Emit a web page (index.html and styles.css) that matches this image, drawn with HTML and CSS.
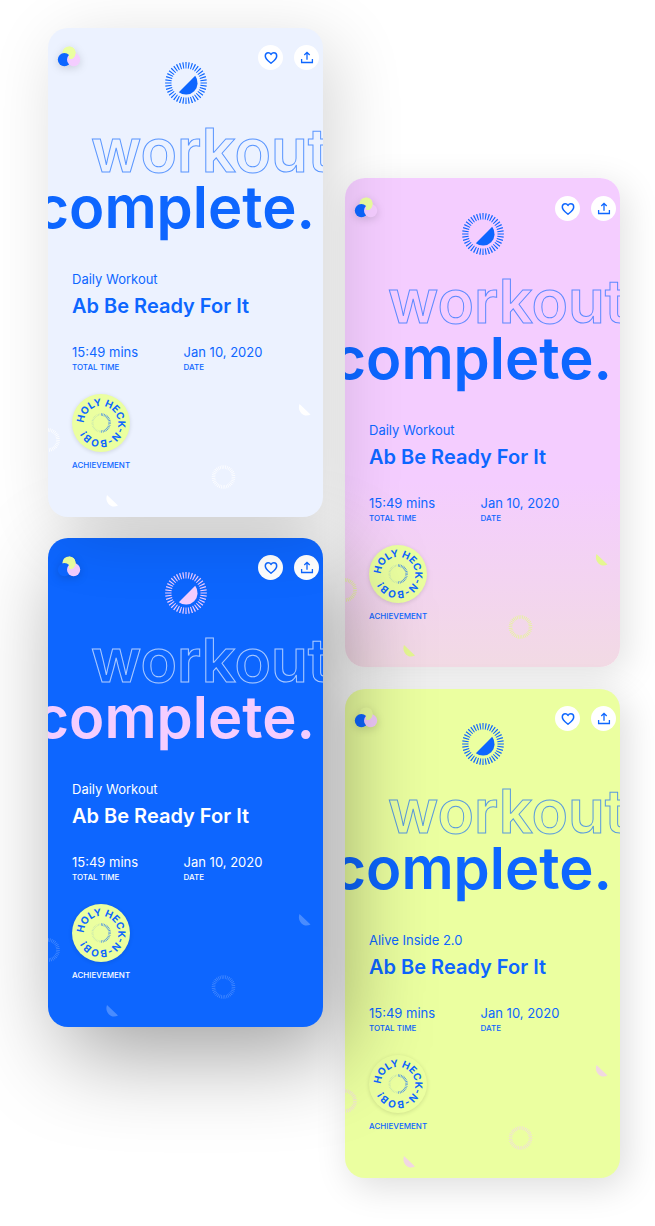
FILE: index.html
```
<!DOCTYPE html>
<html lang="en">
<head>
<meta charset="utf-8">
<meta name="viewport" content="width=device-width, initial-scale=1">
<title>Workout complete</title>
<link rel="stylesheet" href="styles.css">
</head>
<body>
<svg class="sprite" aria-hidden="true">
  <defs>
    <clipPath id="logo-right"><rect x="12" y="0" width="14" height="14"/></clipPath>
    <symbol id="logo" viewBox="0 0 24 24">
      <circle cx="12" cy="8" r="6.6" fill="#ebffa0"/>
      <circle cx="7.4" cy="14.6" r="6.6" fill="#0d66ff"/>
      <circle cx="16.6" cy="14.6" r="6.6" fill="#f4cdff"/>
      <circle cx="12" cy="8" r="6.6" fill="#ebffa0" clip-path="url(#logo-right)"/>
    </symbol>
    <symbol id="sun" viewBox="-21 -21 42 42">
      <circle r="17.7" fill="none" stroke="currentColor" stroke-width="6.4" pathLength="400" stroke-dasharray="4 6" stroke-dashoffset="2"/>
      <path d="M-7.2 9.2A11.7 11.7 0 0 0 9.2 -7.2Z" fill="currentColor"/>
    </symbol>
    <symbol id="heart" viewBox="0 0 14 14">
      <path d="M7 12.2C4.5 10.2 1.3 7.9 1.3 4.9C1.3 3 2.6 1.8 4.2 1.8C5.5 1.8 6.5 2.6 7 3.5C7.5 2.6 8.5 1.8 9.8 1.8C11.4 1.8 12.7 3 12.7 4.9C12.7 7.9 9.5 10.2 7 12.2Z" fill="none" stroke="currentColor" stroke-width="1.5" stroke-linejoin="round"/>
    </symbol>
    <symbol id="share" viewBox="0 0 14 14">
      <path d="M7 8.8V1.5M4.3 4L7 1.3L9.7 4M1.6 8V11.5H12.4V8" fill="none" stroke="currentColor" stroke-width="1.3"/>
    </symbol>
    <symbol id="decor" viewBox="0 0 275 489">
      <g fill="none" stroke="currentColor" stroke-width="3.6">
        <circle cx="0" cy="412" r="10" pathLength="360" stroke-dasharray="4 6"/>
        <circle cx="175.5" cy="449" r="10" pathLength="360" stroke-dasharray="4 6"/>
      </g>
      <path d="M251.5 376L262.5 386.5C259 388.5 255.5 387.5 253.5 385.5C251 383 250.2 379.5 251.5 376ZM59 467L70 477.5C66.5 479.5 63 478.5 61 476.5C58.5 474 57.7 470.5 59 467Z" fill="currentColor"/>
    </symbol>
    <symbol id="badge" viewBox="-29 -29 58 58">
      <path id="badge-ring" d="M-17 0A17 17 0 0 1 17 0A17 17 0 0 1 -17 0" fill="none"/>
      <text class="badge-text"><textPath href="#badge-ring">HOLY HECK-N-BOB!</textPath></text>
      <path d="M0 -8.5A8.5 8.5 0 0 1 0 8.5" fill="none" stroke="#0d66ff" stroke-width="2.6" stroke-dasharray=".7 .8" opacity=".75"/>
      <path d="M0 8.5A8.5 8.5 0 0 1 0 -8.5" fill="none" stroke="#0d66ff" stroke-width="2" stroke-dasharray=".5 .9" opacity=".2"/>
    </symbol>
  </defs>
</svg>

<main class="board">
  <div class="column column--front">
    <article class="card card--ice">
      <svg class="decor" aria-hidden="true"><use href="#decor"/></svg>
      <header class="top">
        <svg class="logo" aria-hidden="true"><use href="#logo"/></svg>
        <svg class="sun" aria-hidden="true"><use href="#sun"/></svg>
        <div class="actions">
          <button class="round" type="button" aria-label="Like"><svg class="icon"><use href="#heart"/></svg></button>
          <button class="round" type="button" aria-label="Share"><svg class="icon"><use href="#share"/></svg></button>
        </div>
      </header>
      <h2 class="hero"><span class="hero-line hero-line--outline">workout</span><span class="hero-line hero-line--solid">complete.</span></h2>
      <p class="series">Daily Workout</p>
      <h3 class="name">Ab Be Ready For It</h3>
      <dl class="stats">
        <div class="stat"><dt class="label">TOTAL TIME</dt><dd class="value">15:49 mins</dd></div>
        <div class="stat"><dt class="label">DATE</dt><dd class="value">Jan 10, 2020</dd></div>
      </dl>
      <figure class="award">
        <svg class="badge"><use href="#badge"/></svg>
        <figcaption class="label">ACHIEVEMENT</figcaption>
      </figure>
    </article>

    <article class="card card--blue">
      <svg class="decor" aria-hidden="true"><use href="#decor"/></svg>
      <header class="top">
        <svg class="logo" aria-hidden="true"><use href="#logo"/></svg>
        <svg class="sun" aria-hidden="true"><use href="#sun"/></svg>
        <div class="actions">
          <button class="round" type="button" aria-label="Like"><svg class="icon"><use href="#heart"/></svg></button>
          <button class="round" type="button" aria-label="Share"><svg class="icon"><use href="#share"/></svg></button>
        </div>
      </header>
      <h2 class="hero"><span class="hero-line hero-line--outline">workout</span><span class="hero-line hero-line--solid">complete.</span></h2>
      <p class="series">Daily Workout</p>
      <h3 class="name">Ab Be Ready For It</h3>
      <dl class="stats">
        <div class="stat"><dt class="label">TOTAL TIME</dt><dd class="value">15:49 mins</dd></div>
        <div class="stat"><dt class="label">DATE</dt><dd class="value">Jan 10, 2020</dd></div>
      </dl>
      <figure class="award">
        <svg class="badge"><use href="#badge"/></svg>
        <figcaption class="label">ACHIEVEMENT</figcaption>
      </figure>
    </article>
  </div>

  <div class="column column--back">
    <article class="card card--pink">
      <svg class="decor" aria-hidden="true"><use href="#decor"/></svg>
      <header class="top">
        <svg class="logo" aria-hidden="true"><use href="#logo"/></svg>
        <svg class="sun" aria-hidden="true"><use href="#sun"/></svg>
        <div class="actions">
          <button class="round" type="button" aria-label="Like"><svg class="icon"><use href="#heart"/></svg></button>
          <button class="round" type="button" aria-label="Share"><svg class="icon"><use href="#share"/></svg></button>
        </div>
      </header>
      <h2 class="hero"><span class="hero-line hero-line--outline">workout</span><span class="hero-line hero-line--solid">complete.</span></h2>
      <p class="series">Daily Workout</p>
      <h3 class="name">Ab Be Ready For It</h3>
      <dl class="stats">
        <div class="stat"><dt class="label">TOTAL TIME</dt><dd class="value">15:49 mins</dd></div>
        <div class="stat"><dt class="label">DATE</dt><dd class="value">Jan 10, 2020</dd></div>
      </dl>
      <figure class="award">
        <svg class="badge"><use href="#badge"/></svg>
        <figcaption class="label">ACHIEVEMENT</figcaption>
      </figure>
    </article>

    <article class="card card--lime">
      <svg class="decor" aria-hidden="true"><use href="#decor"/></svg>
      <header class="top">
        <svg class="logo" aria-hidden="true"><use href="#logo"/></svg>
        <svg class="sun" aria-hidden="true"><use href="#sun"/></svg>
        <div class="actions">
          <button class="round" type="button" aria-label="Like"><svg class="icon"><use href="#heart"/></svg></button>
          <button class="round" type="button" aria-label="Share"><svg class="icon"><use href="#share"/></svg></button>
        </div>
      </header>
      <h2 class="hero"><span class="hero-line hero-line--outline">workout</span><span class="hero-line hero-line--solid">complete.</span></h2>
      <p class="series">Alive Inside 2.0</p>
      <h3 class="name">Ab Be Ready For It</h3>
      <dl class="stats">
        <div class="stat"><dt class="label">TOTAL TIME</dt><dd class="value">15:49 mins</dd></div>
        <div class="stat"><dt class="label">DATE</dt><dd class="value">Jan 10, 2020</dd></div>
      </dl>
      <figure class="award">
        <svg class="badge"><use href="#badge"/></svg>
        <figcaption class="label">ACHIEVEMENT</figcaption>
      </figure>
    </article>
  </div>
</main>
</body>
</html>
```
FILE: styles.css
```
* { box-sizing: border-box; }

body {
  margin: 0;
  background: #fff;
  font-family: Inter, "Open Sans", sans-serif;
}

h2, h3, p, dl, dd, figure { margin: 0; }

.sprite { position: absolute; width: 0; height: 0; }

.board {
  display: grid;
  grid-template-columns: repeat(2, minmax(0, 1fr));
  align-items: start;
  gap: 22px;
  padding: 28px 35px 49px 48px;
  overflow: hidden;
}

.column { display: grid; grid-template-columns: minmax(0, 1fr); gap: 21px; }
.column--front { position: relative; z-index: 1; }
.column--back { margin-top: 150px; gap: 22px; }

.card {
  --ink: #0d66ff;
  --accent: #0d66ff;
  --outline: rgba(13, 102, 255, .65);
  position: relative;
  border-radius: 20px;
  padding-bottom: 46px;
  background: var(--paper);
  color: var(--ink);
}

.card--ice {
  --paper: #ecf2ff;
  --decor: #fff;
  z-index: 1;
  box-shadow: 12px 16px 70px rgba(0, 0, 0, .16);
}

.card--blue {
  --paper: #0d66ff;
  --ink: #fff;
  --accent: #f4cdff;
  --outline: rgba(255, 255, 255, .65);
  --decor: rgba(255, 255, 255, .25);
  box-shadow: 16px 26px 90px rgba(0, 0, 0, .38);
}

.card--pink {
  --paper: linear-gradient(#f4cdff 62%, #f2dae4);
  --decor: #e5f792;
  padding-top: 1px;
  padding-bottom: 45px;
  box-shadow: 6px 8px 36px rgba(0, 0, 0, .12);
}

.card--lime {
  --paper: #ebffa0;
  --decor: #f1d8e2;
  box-shadow: 6px 8px 36px rgba(0, 0, 0, .14);
}

.decor {
  position: absolute;
  inset: 0;
  width: 100%;
  height: 100%;
  color: var(--decor);
}

.top {
  position: relative;
  display: grid;
  grid-template-columns: 1fr auto 1fr;
  align-items: start;
  padding: 17px 4px 0;
}

.logo {
  width: 24px;
  height: 24px;
  margin-left: 5px;
  filter: drop-shadow(0 2px 4px rgba(0, 0, 0, .15));
}

.sun {
  width: 42px;
  height: 42px;
  margin-top: 17px;
  color: var(--accent);
}

.actions { display: flex; justify-content: flex-end; gap: 11px; }

.round {
  display: grid;
  place-items: center;
  width: 25px;
  height: 25px;
  padding: 0;
  border: 0;
  border-radius: 50%;
  background: #fff;
  color: #0d66ff;
}

.icon { width: 14px; height: 14px; }

.hero {
  position: relative;
  display: flex;
  flex-direction: column;
  align-items: flex-end;
  margin-top: 18px;
  overflow-x: clip;
  font-size: 58px;
  font-weight: 600;
  line-height: 57px;
}

.hero-line--outline {
  margin-right: -6px;
  font-size: 60px;
  color: transparent;
  -webkit-text-stroke: 1px var(--outline);
}

.hero-line--solid { margin-right: 8px; color: var(--accent); }

.series, .name, .stats, .award { position: relative; margin-left: 24px; }

.series { margin-top: 34px; font-size: 13px; line-height: 18px; }
.name { margin-top: 4px; font-size: 20px; font-weight: 600; line-height: 28px; }

.stats {
  display: grid;
  grid-template-columns: 4fr 5fr;
  margin-top: 23px;
}

.stat { display: flex; flex-direction: column-reverse; }
.value { font-size: 13px; line-height: 18px; }
.label { font-size: 8px; font-weight: 500; line-height: 12px; }

.award { margin-top: 21px; }

.badge {
  display: block;
  width: 58px;
  height: 58px;
  margin-bottom: 7px;
  border-radius: 50%;
  background: #ebffa0;
  box-shadow: 0 1px 4px rgba(0, 0, 0, .12);
}

.badge-text { font-size: 10px; font-weight: 700; fill: #0d66ff; }
```
